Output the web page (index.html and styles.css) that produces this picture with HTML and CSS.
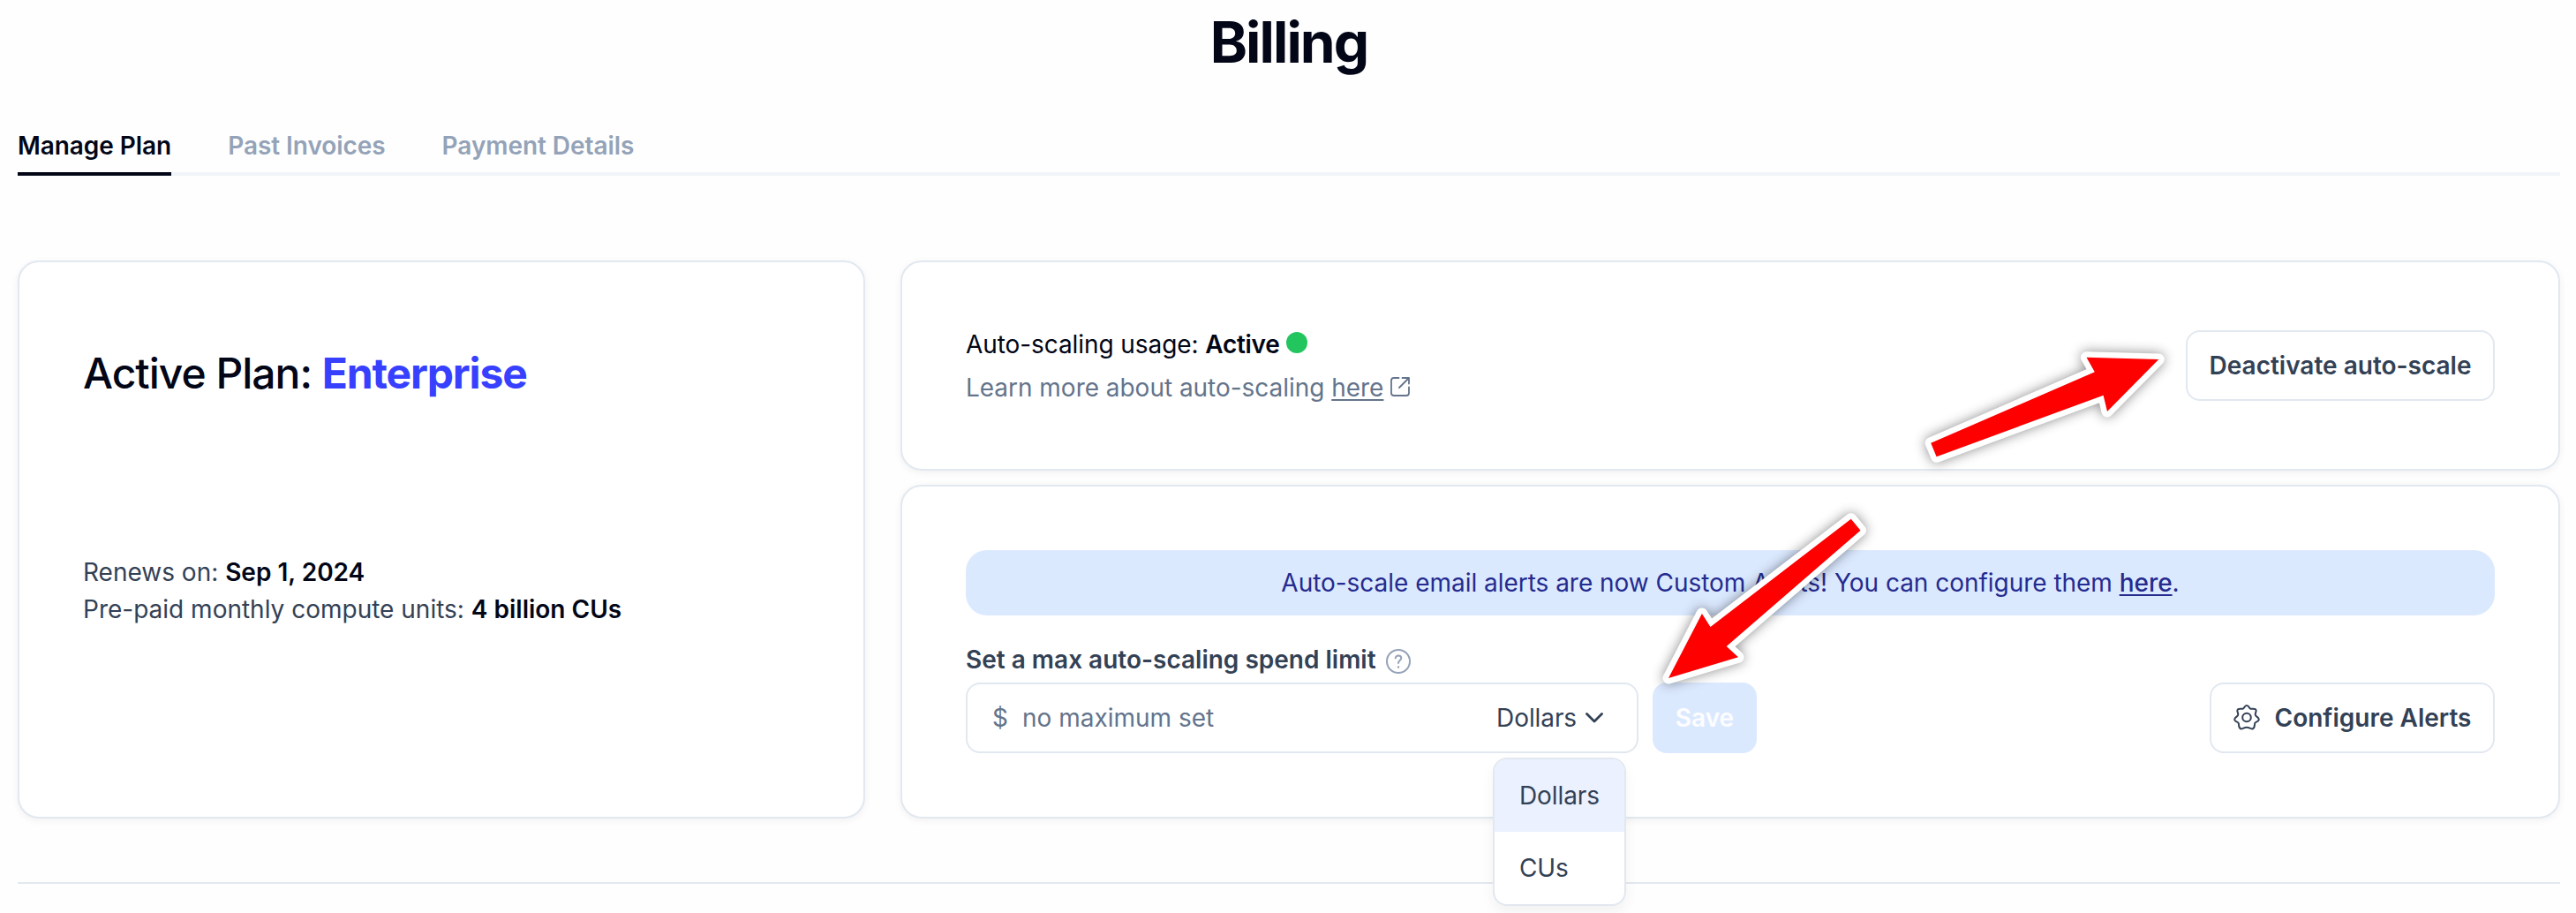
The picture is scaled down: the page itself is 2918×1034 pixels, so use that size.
FILE: index.html
```html
<!DOCTYPE html>
<html lang="en">
<head>
<meta charset="utf-8">
<title>Billing</title>
<link rel="stylesheet" href="styles.css">
</head>
<body>
<main class="page">
  <h1 class="title">Billing</h1>
  <nav class="tabs">
    <a class="tab tab-active">Manage Plan</a>
    <a class="tab">Past Invoices</a>
    <a class="tab">Payment Details</a>
  </nav>
  <div class="columns">
    <section class="card plan">
      <h2 class="plan-name">Active Plan: <strong>Enterprise</strong></h2>
      <div class="plan-facts">
        <p>Renews on: <strong>Sep 1, 2024</strong></p>
        <p>Pre-paid monthly compute units: <strong>4 billion CUs</strong></p>
      </div>
    </section>
    <div class="side">
      <section class="card usage">
        <div class="usage-text">
          <p class="usage-status">Auto-scaling usage: <strong>Active</strong><span class="dot"></span></p>
          <p class="usage-more">Learn more about auto-scaling <a class="link">here</a><svg class="icon-external" viewBox="0 0 22 22"><path d="M9.500 1H4A3 3 0 0 0 1 4V18A3 3 0 0 0 4 21H18A3 3 0 0 0 21 18V11.500M10 12L21 1M13.500 1H21V7.500"/></svg></p>
        </div>
        <button class="button deactivate">Deactivate auto-scale</button>
      </section>
      <section class="card limits">
        <p class="banner">Auto-scale email alerts are now Custom Alerts! You can configure them&nbsp;<a class="link">here</a>.</p>
        <div class="label">Set a max auto-scaling spend limit
          <svg class="icon-help" viewBox="0 0 28 28"><circle cx="14" cy="14" r="13"/><path d="M10.700 10.400C11.100 8.400 12.400 7.500 14.100 7.500C16 7.500 17.300 8.700 17.300 10.400C17.300 12.700 14 13 14 16"/><circle class="point" cx="14" cy="20.500" r="1.200"/></svg>
        </div>
        <div class="controls">
          <div class="field">
            <span class="currency">$</span>
            <span class="placeholder">no maximum set</span>
            <span class="unit">Dollars
              <svg class="icon-chevron" viewBox="0 0 20 12"><path d="M1.500 1.500L10 10L18.500 1.500"/></svg>
            </span>
            <ul class="menu">
              <li class="selected">Dollars</li>
              <li>CUs</li>
            </ul>
          </div>
          <button class="button save">Save</button>
          <button class="button configure"><svg class="icon-gear" viewBox="0 0 30 30"><path d="M15 1C18 1 17.300 4.600 19.800 4.800C21.500 5 25 3.800 25.600 6.400C26 8.500 24 10 25 12.200C25.800 14 29.200 14.500 28.700 17.200C28.200 19.500 25.200 19 24.300 21C23.500 23 24.500 26.200 22 27.200C19.500 28.200 18.300 25.700 15 25.700C11.700 25.700 10.500 28.200 8 27.200C5.500 26.200 6.500 23 5.700 21C4.800 19 1.800 19.500 1.300 17.200C.8 14.500 4.200 14 5 12.200C6 10 4 8.500 4.400 6.400C5 3.800 8.500 5 10.200 4.800C12.700 4.600 12 1 15 1Z"/><circle cx="15" cy="14.500" r="4.800"/></svg>Configure Alerts</button>
        </div>
      </section>
    </div>
  </div>
  <hr class="divider">
</main>
<svg class="arrows" viewBox="0 0 2918 1034">
  <polygon points="2445.300,407 2363.500,404.700 2372.800,421.300 2187.200,501.700 2193.600,517.300 2382.600,447.700 2387,466"/>
  <polygon points="2096.800,587.700 2107.500,600.700 1955.700,732 1969,744.300 1890,768 1927.900,695 1937.500,710"/>
</svg>
</body>
</html>
```
FILE: styles.css
```css
* { box-sizing: border-box; margin: 0; padding: 0; }
body {
  width: 2918px;
  height: 1034px;
  overflow: hidden;
  background: #fefefe;
  color: #020617;
  font: 28px/42px Inter, "Liberation Sans", sans-serif;
}
.page { padding: 8px 18px 0 20px; }
.title { font-size: 64px; line-height: 80px; font-weight: 700; letter-spacing: -1.900px; text-align: center; }
.tabs { display: flex; gap: 64px; height: 68px; margin-top: 43px; box-shadow: inset 0 -4px #f1f5f9; padding-top: 13px; }
.tab { height: 55px; font-weight: 600; letter-spacing: -.06px; color: #94a3b8; }
.tab-active { color: #020617; border-bottom: 4px solid #020617; }
.columns { display: flex; gap: 40px; margin-top: 96px; }
.card { background: #fff; border: 2px solid #e2e8f0; border-radius: 24px; box-shadow: 0 2px 8px rgba(15, 23, 42, .06); }
.plan { width: 960px; height: 632px; padding: 94px 72px 0; }
.plan-name { font-size: 48px; line-height: 64px; font-weight: 500; letter-spacing: -1px; }
.plan-name strong { font-weight: 700; letter-spacing: -1.150px; color: #3840ff; }
.plan-facts { margin-top: 172px; color: #334155; }
.plan-facts strong { font-weight: 600; color: #020617; }
.side { width: 1880px; display: flex; flex-direction: column; gap: 16px; }
.usage { height: 238px; padding: 72px 72px 0; display: flex; justify-content: space-between; align-items: flex-start; }
.usage-status { margin: 0 0 7px; display: flex; white-space: pre; letter-spacing: -.080px; }
.usage-status strong { font-weight: 600; letter-spacing: -.300px; }
.dot { width: 24px; height: 24px; margin: 7px 0 0 8px; border-radius: 50%; background: #22c55e; }
.usage-more { color: #64748b; display: flex; white-space: pre; letter-spacing: -.030px; }
.link { text-decoration: underline; text-decoration-thickness: 2px; text-underline-offset: 3px; }
.icon-external { width: 22px; height: 22px; margin: 9px 0 0 8px; fill: none; stroke: currentColor; stroke-width: 1.800; stroke-linecap: round; stroke-linejoin: round; }
.button { height: 80px; border: 2px solid #e2e8f0; border-radius: 16px; background: #fff; color: #334155; font: inherit; font-weight: 600; white-space: nowrap; display: flex; align-items: center; justify-content: center; }
.deactivate { width: 350px; margin-top: 5px; }
.limits { height: 378px; padding: 72px 72px 0; }
.banner { height: 74px; line-height: 74px; border-radius: 24px; background: #dbe9ff; color: #252b8f; text-align: center; letter-spacing: -.030px; }
.banner .link { font-weight: 500; }
.label { display: flex; align-items: center; height: 42px; margin-top: 29px; font-weight: 600; color: #334155; }
.icon-help { width: 28px; height: 28px; margin-left: 11px; margin-top: 4px; fill: none; stroke: #94a3b8; stroke-width: 2; stroke-linecap: round; }
.icon-help .point { fill: #94a3b8; stroke: none; }
.controls { display: flex; margin-top: 5px; }
.field { position: relative; width: 762px; height: 80px; display: flex; align-items: center; border: 2px solid #e2e8f0; border-radius: 16px; padding: 0 38px 0 28px; background: #fff; color: #64748b; }
.placeholder { margin-left: 16px; }
.unit { margin-left: auto; display: flex; align-items: center; gap: 10px; color: #334155; letter-spacing: -.100px; }
.icon-chevron { width: 20px; height: 12px; fill: none; stroke: currentColor; stroke-width: 2.800; stroke-linecap: round; stroke-linejoin: round; }
.menu { position: absolute; left: 595px; top: 83px; width: 151px; height: 168px; list-style: none; overflow: hidden; border: 2px solid #e2e8f0; border-radius: 16px; background: #fff; color: #334155; box-shadow: 0 8px 16px rgba(15, 23, 42, .05); }
.menu li { height: 82px; line-height: 82px; padding-left: 28px; letter-spacing: -.100px; }
.menu .selected { background: #ebf1ff; }
.save { width: 118px; margin-left: 16px; border: 0; background: #dbe9ff; color: #fdfdff; }
.configure { width: 323px; margin-left: auto; }
.icon-gear { width: 30px; height: 30px; margin-right: 17px; fill: none; stroke: currentColor; stroke-width: 2; }
.divider { margin-top: 72px; border: 0; height: 2px; background: #e2e8f0; }
.arrows { position: absolute; left: 0; top: 0; width: 2918px; height: 1034px; pointer-events: none; filter: drop-shadow(0 0 7px rgba(0, 0, 0, .45)); }
.arrows polygon { fill: #f00; stroke: #fff; stroke-width: 13px; stroke-linejoin: round; paint-order: stroke; }
```
